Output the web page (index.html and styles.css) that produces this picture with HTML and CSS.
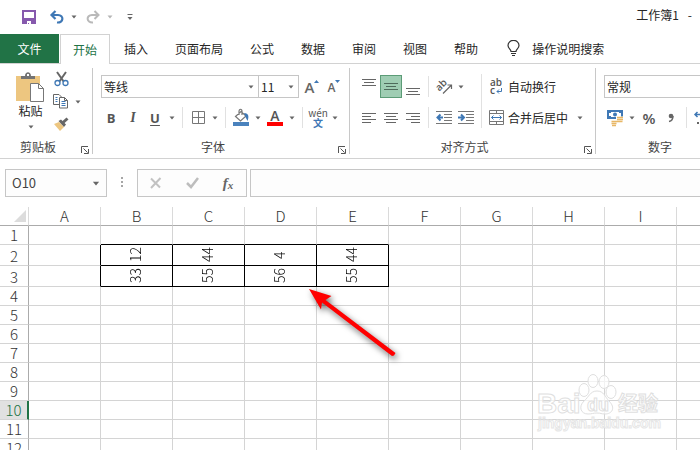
FILE: index.html
```html
<!DOCTYPE html>
<html lang="zh-CN">
<head>
<meta charset="utf-8">
<title>工作簿1</title>
<link rel="stylesheet" href="styles.css">
</head>
<body>
<svg class="defs" aria-hidden="true">
  <symbol id="caret" viewBox="0 0 6 4"><path d="M0.5 0.5h5L3 3.5z" fill="currentColor"/></symbol>
  <symbol id="launch" viewBox="0 0 8 8"><path d="M0.5 7V0.5H7M2.5 2.5l4 4M7.5 3v4.5H3" fill="none" stroke="#555"/></symbol>
</svg>

<header class="titlebar">
  <div class="quick">
    <button class="tool" aria-label="保存"><svg width="14" height="14" viewBox="0 0 14 14"><path d="M1 1h12v12H1z" fill="#fff" stroke="#8659ad" stroke-width="2"/><path d="M1 8.500h12" stroke="#8659ad"/><path d="M2 9h10v5H2z" fill="#8659ad"/><path d="M5 11h4v3H7v-1H6v1H5z" fill="#fff"/></svg></button>
    <button class="tool undo" aria-label="撤消"><svg width="16" height="14" viewBox="0 0 16 14"><path d="M6.500 1L2.500 5l4 4M3 5h6c6 0 6 8-1 7.500" fill="none" stroke="#3f78b5" stroke-width="2.200"/></svg></button>
    <button class="drop" aria-label="撤消列表"><svg class="caret"><use href="#caret"/></svg></button>
    <button class="tool redo" aria-label="恢复"><svg width="16" height="14" viewBox="0 0 16 14"><path d="M9.500 1l4 4-4 4M13 5H7C1 5 1 13 8 12.500" fill="none" stroke="#b9b9b9" stroke-width="2"/></svg></button>
    <button class="drop faint" aria-label="恢复列表"><svg class="caret"><use href="#caret"/></svg></button>
    <button class="tool custom" aria-label="自定义快速访问工具栏"><svg width="6" height="7" viewBox="0 0 6 7"><path d="M0.500 0.500h5" stroke="#666"/><path d="M0.500 3h5L3 6z" fill="#666"/></svg></button>
  </div>
  <div class="doc"><span>工作簿1</span><span>-</span></div>
</header>

<nav class="tabs">
  <button class="tab file">文件</button>
  <button class="tab active">开始</button>
  <button class="tab">插入</button>
  <button class="tab">页面布局</button>
  <button class="tab">公式</button>
  <button class="tab">数据</button>
  <button class="tab">审阅</button>
  <button class="tab">视图</button>
  <button class="tab">帮助</button>
  <button class="tell"><svg width="13" height="17" viewBox="0 0 13 17"><path d="M4 11.500C4 9 1 8.500 1 5.500a5.300 5 0 0 1 11 0C12 8.500 9 9 9 11.500zM4 13.500h5M5 15.500h3" fill="none" stroke="#333" stroke-width="1.200"/></svg>操作说明搜索</button>
</nav>

<section class="ribbon">
  <div class="group clipboard">
    <div class="clip-body">
      <button class="paste">
        <svg width="29" height="31" viewBox="0 0 29 31"><path d="M0 4h24v25H0z" fill="#edc680"/><path d="M5 7V4h4c0-5 6-5 6 0h4v3z" fill="#737373"/><path d="M11 2h2v2h-2z" fill="#fff"/><path d="M14.500 11.500h8l5 5v13h-13z" fill="#fff" stroke="#777"/><path d="M22.500 11.500v5h5" fill="none" stroke="#777"/></svg>
        <span>粘贴</span>
        <svg class="caret"><use href="#caret"/></svg>
      </button>
      <div class="clip-tools">
        <button class="tool" aria-label="剪切"><svg width="15" height="16" viewBox="0 0 15 16"><path d="M3 1l7 10M12 1L5 11" stroke="#666" stroke-width="2"/><circle cx="3.500" cy="12" r="2.500" fill="#fff" stroke="#3f78b5" stroke-width="1.300"/><circle cx="11.500" cy="12" r="2.500" fill="#fff" stroke="#3f78b5" stroke-width="1.300"/></svg></button>
        <div class="row"><button class="tool" aria-label="复制"><svg width="16" height="15" viewBox="0 0 16 15"><path d="M6 10.500H0.500v-10H6L8.500 3" fill="#fff" stroke="#666"/><path d="M6.500 3.500h5l3 3v7.500h-8z" fill="#fff" stroke="#666"/><path d="M11.500 3.500v3h3" fill="none" stroke="#666"/><path d="M2.500 3.500h2M2.500 5.500h2M2.500 7.500h2M8.500 7.500h4M8.500 9.500h4M8.500 11.500h4" stroke="#3f78b5"/></svg></button><button class="drop" aria-label="复制选项"><svg class="caret"><use href="#caret"/></svg></button></div>
        <button class="tool" aria-label="格式刷"><svg width="17" height="14" viewBox="0 0 17 14"><path d="M1 7l5-2 5 5-4 4z" fill="#edc680"/><path d="M5.500 4l2.500-1.500 5 5-2 2.500z" fill="#666"/><path d="M10 5.500L14.500 1.500" stroke="#666" stroke-width="3"/></svg></button>
      </div>
    </div>
    <div class="foot"><span>剪贴板</span><button class="launch" aria-label="剪贴板设置"><svg width="8" height="8"><use href="#launch"/></svg></button></div>
  </div>

  <div class="group font">
    <div class="rows">
      <div class="row">
        <label class="combo name"><select aria-label="字体"><option>等线</option></select><svg class="caret"><use href="#caret"/></svg></label>
        <label class="combo size"><select aria-label="字号"><option>11</option></select><svg class="caret"><use href="#caret"/></svg></label>
        <button class="tool grow" aria-label="增大字号"><span>A</span><svg width="5" height="3" viewBox="0 0 5 3"><path d="M0 3h5L2.500 0z" fill="#3f78b5"/></svg></button>
        <button class="tool shrink" aria-label="减小字号"><span>A</span><svg width="5" height="3" viewBox="0 0 5 3"><path d="M0 0h5L2.500 3z" fill="#3f78b5"/></svg></button>
      </div>
      <div class="row">
        <button class="tool b">B</button>
        <button class="tool i">I</button>
        <button class="tool u">U</button>
        <button class="drop" aria-label="下划线选项"><svg class="caret"><use href="#caret"/></svg></button>
        <i class="sep"></i>
        <button class="tool" aria-label="边框"><svg width="13" height="13" viewBox="0 0 13 13"><path d="M0.500 0.500h12v12h-12zM6.500 0v13M0 6.500h13" fill="none" stroke="#777"/></svg></button>
        <button class="drop" aria-label="边框选项"><svg class="caret"><use href="#caret"/></svg></button>
        <i class="sep"></i>
        <button class="tool" aria-label="填充颜色"><svg width="16" height="17" viewBox="0 0 16 17"><path d="M0 13h16v4H0z" fill="#4a82bd"/><path d="M2.500 7.500L8 2.500l5 4.500-5.500 5zM6 6V2.500c0-3 3-3 3 0V6" fill="none" stroke="#777" stroke-width="1.200"/><path d="M11 4c5 0 5 4 3.500 8L12.500 8z" fill="#3f78b5"/></svg></button>
        <button class="drop" aria-label="填充选项"><svg class="caret"><use href="#caret"/></svg></button>
        <button class="tool color" aria-label="字体颜色"><span>A</span></button>
        <button class="drop" aria-label="字体颜色选项"><svg class="caret"><use href="#caret"/></svg></button>
        <i class="sep"></i>
        <button class="tool pinyin"><span>wén</span><span>文</span></button>
        <button class="drop" aria-label="拼音选项"><svg class="caret"><use href="#caret"/></svg></button>
      </div>
    </div>
    <div class="foot"><span>字体</span><button class="launch" aria-label="字体设置"><svg width="8" height="8"><use href="#launch"/></svg></button></div>
  </div>

  <div class="group align">
    <div class="cols">
      <div class="rows">
        <div class="row">
          <button class="tool" aria-label="顶端对齐"><svg width="14" height="18" viewBox="0 0 14 18"><path d="M0 1.500h14M2 4.500h10M0 7.500h14" stroke="#666"/></svg></button>
          <button class="tool on" aria-label="垂直居中"><svg width="14" height="18" viewBox="0 0 14 18"><path d="M0 5.500h14M2 8.500h10M0 11.500h14" stroke="#4f6b5c"/></svg></button>
          <button class="tool" aria-label="底端对齐"><svg width="14" height="18" viewBox="0 0 14 18"><path d="M0 10.500h14M2 13.500h10M0 16.500h14" stroke="#666"/></svg></button>
          <i class="sep"></i>
          <button class="tool" aria-label="方向"><svg width="17" height="16" viewBox="0 0 17 16"><g transform="rotate(-45 6 7)"><text x="0" y="9" class="glyph">ab</text></g><path d="M7 14.500l8-8M11.500 6H15.500v4" fill="none" stroke="#666" stroke-width="1.200"/></svg></button>
          <button class="drop" aria-label="方向选项"><svg class="caret"><use href="#caret"/></svg></button>
        </div>
        <div class="row">
          <button class="tool" aria-label="左对齐"><svg width="14" height="12" viewBox="0 0 14 12"><path d="M0 1.500h14M0 4.500h9M0 7.500h14M0 10.500h9" stroke="#666"/></svg></button>
          <button class="tool" aria-label="居中"><svg width="14" height="12" viewBox="0 0 14 12"><path d="M0 1.500h14M2 4.500h10M0 7.500h14M2 10.500h10" stroke="#666"/></svg></button>
          <button class="tool" aria-label="右对齐"><svg width="14" height="12" viewBox="0 0 14 12"><path d="M0 1.500h14M5 4.500h9M0 7.500h14M5 10.500h9" stroke="#666"/></svg></button>
          <i class="sep"></i>
          <button class="tool" aria-label="减少缩进量"><svg width="16" height="14" viewBox="0 0 16 14"><path d="M0 0.500h16M8 3.500h8M8 6.500h8M8 9.500h8M0 12.500h16" stroke="#777"/><path d="M7 6.500H2M4.500 3.500l-3 3 3 3" fill="none" stroke="#3f78b5" stroke-width="2"/></svg></button>
          <button class="tool" aria-label="增加缩进量"><svg width="16" height="14" viewBox="0 0 16 14"><path d="M0 0.500h16M8 3.500h8M8 6.500h8M8 9.500h8M0 12.500h16" stroke="#777"/><path d="M0 6.500h5M3 3.500l3 3-3 3" fill="none" stroke="#3f78b5" stroke-width="2"/></svg></button>
        </div>
      </div>
      <i class="sep tall"></i>
      <div class="rows">
        <button class="wide"><svg class="ic" width="15" height="17" viewBox="0 0 15 17"><text x="1" y="8" class="glyph">ab</text><text x="1" y="16" class="glyph">c</text><path d="M12.500 10v3.500H8M10 11.500l-2 2 2 2" fill="none" stroke="#3f78b5"/></svg>自动换行</button>
        <button class="wide"><svg class="ic" width="15" height="15" viewBox="0 0 15 15"><path d="M0.500 0.500h14v14h-14zM0 3.500h15M0 11.500h15M7.500 0v3.500M7.500 11.500V15" fill="none" stroke="#777"/><path d="M2.500 7.500h10M4.500 5.500l-2 2 2 2M10.500 5.500l2 2-2 2" fill="none" stroke="#3f78b5"/></svg>合并后居中<svg class="caret"><use href="#caret"/></svg></button>
      </div>
    </div>
    <div class="foot"><span>对齐方式</span><button class="launch" aria-label="对齐设置"><svg width="8" height="8"><use href="#launch"/></svg></button></div>
  </div>

  <div class="group number">
    <div class="rows">
      <div class="row"><label class="combo format"><select aria-label="数字格式"><option>常规</option></select></label></div>
      <div class="row">
        <button class="tool" aria-label="会计数字格式"><svg width="17" height="16" viewBox="0 0 17 16"><path d="M1 1h14v7H1z" fill="#fff" stroke="#3f78b5" stroke-width="2"/><path d="M1 1h3v2H1zM12 1h3v2h-3zM1 6h3v2H1z" fill="#3f78b5"/><circle cx="8" cy="4.500" r="2" fill="#3f78b5"/><path d="M9 6.500h7v7H9zM4 10h6v6H4z" fill="#fff"/><path d="M10 7.500h6M10 9.500h6M9.500 11.500h6M4.500 11.500h5M4.500 13.500h5M5 15.500h4" stroke="#e8b766" stroke-width="1.500"/></svg></button>
        <button class="drop" aria-label="货币选项"><svg class="caret"><use href="#caret"/></svg></button>
        <button class="tool pct">%</button>
        <button class="tool" aria-label="千位分隔样式"><svg width="6" height="9" viewBox="0 0 6 9"><path d="M1 8.500c3-.5 4-2 4-5.500" fill="none" stroke="#666" stroke-width="1.500"/><circle cx="3" cy="3" r="2.300" fill="#666"/></svg></button>
        <i class="sep"></i>
        <button class="tool" aria-label="增加小数位数"><svg width="16" height="16" viewBox="0 0 16 16"><path d="M1 4.500h6M3.500 2L1 4.500 3.500 7" fill="none" stroke="#3f78b5" stroke-width="1.500"/><path d="M3 12h2v2H3z" fill="#666"/><ellipse cx="9" cy="11" rx="2" ry="3" fill="none" stroke="#666"/></svg></button>
      </div>
    </div>
    <div class="foot"><span>数字</span><button class="launch" aria-label="数字设置"><svg width="8" height="8"><use href="#launch"/></svg></button></div>
  </div>
</section>

<section class="formula">
  <label class="namebox"><input value="O10" aria-label="名称框"><svg class="caret big"><use href="#caret"/></svg></label>
  <svg class="dots" width="2" height="12" viewBox="0 0 2 12"><path d="M0 0h2v2H0zM0 4h2v2H0zM0 8h2v2H0z" fill="#a6a6a6"/></svg>
  <div class="fxbox">
    <button aria-label="取消"><svg width="12" height="12" viewBox="0 0 12 12"><path d="M1 1.500l9 9M10.500 1L1 11" stroke="#c2c2c2" stroke-width="2"/></svg></button>
    <button aria-label="输入"><svg width="13" height="12" viewBox="0 0 13 12"><path d="M1 6l4 4 7-9" fill="none" stroke="#bdbdbd" stroke-width="2.500"/></svg></button>
    <button class="fx" aria-label="插入函数">f<sub>x</sub></button>
  </div>
  <input class="entry" aria-label="编辑栏">
</section>

<main class="sheet">
  <table>
    <colgroup><col class="rowcol"><col span="10"></colgroup>
    <thead><tr><th class="corner"><svg width="12" height="12" viewBox="0 0 12 12"><path d="M12 0v12H0z" fill="#dcdcdc"/></svg></th><th>A</th><th>B</th><th>C</th><th>D</th><th>E</th><th>F</th><th>G</th><th>H</th><th>I</th><th></th></tr></thead>
    <tbody>
      <tr class="above"><th>1</th><td></td><td></td><td></td><td></td><td></td><td></td><td></td><td></td><td></td><td></td></tr>
      <tr class="data"><th>2</th><td></td><td><span>12</span></td><td><span>44</span></td><td><span>4</span></td><td><span>44</span></td><td></td><td></td><td></td><td></td><td></td></tr>
      <tr class="data"><th>3</th><td></td><td><span>33</span></td><td><span>55</span></td><td><span>56</span></td><td><span>55</span></td><td></td><td></td><td></td><td></td><td></td></tr>
      <tr><th>4</th><td></td><td></td><td></td><td></td><td></td><td></td><td></td><td></td><td></td><td></td></tr>
      <tr><th>5</th><td></td><td></td><td></td><td></td><td></td><td></td><td></td><td></td><td></td><td></td></tr>
      <tr><th>6</th><td></td><td></td><td></td><td></td><td></td><td></td><td></td><td></td><td></td><td></td></tr>
      <tr><th>7</th><td></td><td></td><td></td><td></td><td></td><td></td><td></td><td></td><td></td><td></td></tr>
      <tr><th>8</th><td></td><td></td><td></td><td></td><td></td><td></td><td></td><td></td><td></td><td></td></tr>
      <tr><th>9</th><td></td><td></td><td></td><td></td><td></td><td></td><td></td><td></td><td></td><td></td></tr>
      <tr class="current"><th>10</th><td></td><td></td><td></td><td></td><td></td><td></td><td></td><td></td><td></td><td></td></tr>
      <tr><th>11</th><td></td><td></td><td></td><td></td><td></td><td></td><td></td><td></td><td></td><td></td></tr>
      <tr><th>12</th><td></td><td></td><td></td><td></td><td></td><td></td><td></td><td></td><td></td><td></td></tr>
    </tbody>
  </table>
  <svg class="arrow" width="100" height="80" viewBox="0 0 100 80" aria-hidden="true"><path d="M4 4l22.500 7-6 4 70 53-1.500 2.500-2 .5-70-53.500-1 7z" fill="#f00"/></svg>
  <svg class="mark" width="128" height="64" viewBox="0 0 128 64">
    <g fill="#fff" fill-opacity="0.700" stroke="#dfdfdf">
      <ellipse cx="48" cy="21" rx="5" ry="6.500"/><ellipse cx="57" cy="12" rx="5" ry="6.500"/><ellipse cx="68" cy="13" rx="5" ry="6.500"/><ellipse cx="75" cy="23" rx="5" ry="6.500"/>
      <path d="M61 22c7 0 8 6 12 10 7 7 3 13-4 13-4 0-4-1-8-1s-5 1-9 1c-7 0-10-7-4-13 5-4 6-10 13-10z"/>
    </g>
    <text x="1" y="44" class="bai">Bai</text><text x="51" y="42" class="du">du</text><text x="82" y="42" class="jing">经验</text><text x="2" y="59" class="url">jingyan.baidu.com</text>
  </svg>
</main>
</body>
</html>
```
FILE: styles.css
```css
* { box-sizing: border-box; }
html { overflow: hidden; }
body {
  margin: 0;
  background: #fff;
  color: #262626;
  font: 12px/16px "Noto Sans CJK SC", sans-serif;
}
button, input, select {
  margin: 0;
  padding: 0;
  border: 0;
  background: none;
  color: inherit;
  font: inherit;
}
svg { display: block; flex: none; }
.defs { display: none; }
.caret { width: 6px; height: 4px; color: #666; }
.caret.big { width: 8px; height: 5px; }
.faint .caret { color: #b5b5b5; }

.tool, .drop {
  display: flex;
  flex: none;
  align-items: center;
  justify-content: center;
  height: 22px;
}
.tool { width: 22px; color: #555; }
.tool svg { overflow: visible; }
.drop { width: 12px; }
.row { display: flex; align-items: center; height: 23px; }
.sep { flex: none; width: 1px; height: 21px; margin: 0 4px; background: #e1e1e1; }
.sep.tall { height: 54px; }

.titlebar {
  display: flex;
  align-items: center;
  justify-content: space-between;
  height: 34px;
  padding: 0 8px 4px 18px;
}
.quick { display: flex; align-items: center; padding-top: 4px; }
.undo { margin-left: 6px; }
.redo { margin-left: 2px; }
.custom { margin-left: 3px; }
.doc { display: flex; gap: 9px; }

.tabs { display: flex; height: 30px; border-bottom: 1px solid #d2d2d2; white-space: nowrap; }
.tab { flex: none; height: 29px; margin-left: 1px; padding: 0 13px; }
.tab.file { width: 59px; margin: 0; background: #217346; color: #fff; }
.tab.active {
  height: 30px;
  padding: 0 12px;
  border: 1px solid #d2d2d2;
  border-bottom: 0;
  background: #fff;
  color: #217346;
}
.tell { display: flex; align-items: center; gap: 12px; height: 29px; padding-left: 16px; }

.ribbon {
  display: flex;
  padding: 4px 0;
  overflow: hidden;
  border-bottom: 1px solid #d2d2d2;
}
.group {
  display: flex;
  flex: none;
  flex-direction: column;
  justify-content: space-between;
  height: 86px;
  border-right: 1px solid #c8c8c8;
}
.clipboard { width: 93px; }
.font { width: 257px; }
.align { width: 246px; }
.number { width: 145px; }
.rows { display: flex; flex-direction: column; gap: 8px; padding-top: 7px; }
.font > .rows { padding-left: 7px; }
.align .cols, .number > .rows { padding-left: 8px; }
.cols { display: flex; }
.cols .tall { margin-top: 6px; }
.foot { display: flex; height: 14px; line-height: 14px; text-align: center; color: #444; }
.foot span { flex: 1; }
.launch { display: flex; align-items: flex-end; width: 16px; padding: 0 0 0 5px; }

.clip-body { display: flex; padding-left: 14px; }
.paste { display: flex; flex-direction: column; align-items: center; width: 33px; padding-top: 4px; }
.paste .caret { margin-top: 6px; }
.clip-tools { padding-left: 3px; }

.combo { position: relative; flex: none; height: 23px; border: 1px solid #c6c6c6; }
.combo select {
  display: block;
  width: 100%;
  height: 21px;
  padding-left: 2px;
  appearance: none;
}
.combo .caret { position: absolute; top: 9px; right: 4px; pointer-events: none; }
.name { width: 158px; margin-left: 1px; }
.size { width: 40px; border-left: 0; }
.format { width: 120px; }

.grow, .shrink { align-items: flex-start; font: 600 15px/22px "Open Sans", sans-serif; color: #666; }
.grow { margin-left: 2px; }
.shrink { font-size: 12px; line-height: 24px; }
.grow svg, .shrink svg { margin-top: 4px; }
.b, .i, .u { font: bold 13px/16px "Open Sans", sans-serif; }
.i { font-family: "Liberation Serif", serif; font-style: italic; font-size: 14px; }
.u { text-decoration: underline; text-underline-offset: 2px; }
.color span {
  width: 16px;
  height: 17px;
  border-bottom: 4px solid #f00;
  font: 600 14px/13px "Open Sans", sans-serif;
}
.pinyin { flex-direction: column; font-size: 10px; line-height: 10px; white-space: nowrap; }
.pinyin span + span { color: #3f78b5; font-weight: bold; }
.on { height: 23px; border: 1px solid #5c9c77; background: #9fcdb3; }
.glyph { fill: #555; font: 600 10px "Open Sans", sans-serif; }
.wide { display: flex; align-items: center; height: 23px; white-space: nowrap; }
.wide .ic { margin: 0 4px 0 3px; overflow: visible; }
.wide .caret { margin-left: 9px; }
.pct { font: 600 15px/20px "Open Sans", sans-serif; }

.formula { display: flex; padding: 10px 0 10px 5px; }
.namebox, .fxbox, .entry { height: 28px; border: 1px solid #c6c6c6; background: #fdfdfd; }
.namebox { display: flex; align-items: center; flex: none; width: 102px; padding: 0 6px; }
.namebox input { flex: 1; width: 0; color: #444; font-size: 13px; }
.dots { align-self: center; margin: 0 14px; }
.fxbox { display: flex; flex: none; width: 110px; margin-right: 3px; }
.fxbox button { display: flex; flex: 1; align-items: center; justify-content: center; }
.fxbox .fx { font: italic bold 15px/20px "Liberation Serif", serif; color: #666; }
.fx sub { font-size: 11px; line-height: 10px; vertical-align: baseline; padding-top: 4px; }
.entry { flex: 1; min-width: 0; border-right: 0; padding: 0 6px; }

.sheet { position: relative; overflow: hidden; }
table { width: 749px; table-layout: fixed; border-collapse: separate; border-spacing: 0; }
col { width: 72px; }
.rowcol { width: 29px; }
th, td { height: 19px; padding: 0; border: 0 solid #d4d4d4; border-width: 0 1px 1px 0; text-align: center; vertical-align: bottom; }
th { color: #333; font-size: 15px; font-weight: 300; line-height: 18px; }
thead th { border-bottom-color: #ababab; border-right-color: #dadada; }
tbody th { border-right-color: #ababab; }
.corner svg { margin: 0 0 3px 14px; }
.current th { border-right: 2px solid #217346; background: #e1e1e1; color: #217346; }
.above td:nth-child(n+3):nth-child(-n+6) { border-bottom-color: #000; }
.data th, .data td { height: 21px; }
.data td { padding-right: 4px; }
.data td:nth-child(2) { border-right-color: #000; }
.data td:nth-child(n+3):nth-child(-n+6) { border-color: #000; }
.data span {
  display: block;
  width: 20px;
  height: 20px;
  margin: 0 auto;
  writing-mode: vertical-rl;
  transform: rotate(180deg);
  text-align: center;
  color: #000;
  font-size: 14px;
  font-weight: 300;
  line-height: 20px;
}
.arrow { position: absolute; top: 78px; left: 305px; overflow: visible; filter: drop-shadow(2px 3px 3px rgba(0, 0, 0, 0.6)); }
.mark { position: absolute; top: 162px; left: 536px; }
.mark text { fill: #fff; fill-opacity: 0.7; stroke: #dfdfdf; font-family: "Liberation Sans", sans-serif; font-weight: bold; }
.mark .bai { font-size: 28px; }
.mark .du { font-size: 18px; }
.mark .jing { font-family: "Noto Sans CJK SC", sans-serif; font-size: 20px; }
.mark .url { font-size: 14px; stroke: #e6e6e6; }
```
